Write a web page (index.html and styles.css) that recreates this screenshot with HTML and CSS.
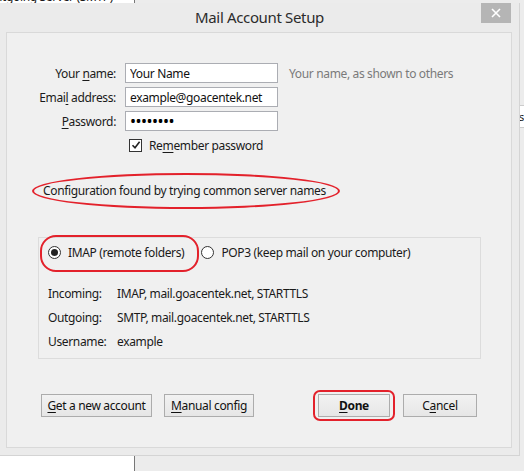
FILE: index.html
```html
<!DOCTYPE html>
<html lang="en">
<head>
  <meta charset="UTF-8" />
  <title>Mail Account Setup</title>
  <link rel="stylesheet" href="styles.css">
</head>
<body>
  <div class="desktop">
    <div class="back-left">
      <div class="back-text">Outgoing Server (SMTP)</div>
    </div>
    <div class="back-right">
      <div class="back-row">s</div>
    </div>
  </div>

  <div class="dialog">
    <div class="titlebar">
      <div class="title">Mail Account Setup</div>
      <button class="close-btn" title="Close">
        <svg viewBox="0 0 10 10" width="10" height="10">
          <path d="M1 1L9 9M9 1L1 9" stroke="#fff" stroke-width="1.6"></path>
        </svg>
      </button>
    </div>

    <div class="panel">
      <div class="form-grid">
        <label class="field-label" for="name">Your <u>n</u>ame:</label>
        <input class="field" id="name" type="text" value="Your Name">
        <div class="hint">Your name, as shown to others</div>

        <label class="field-label" for="email">Emai<u>l</u> address:</label>
        <input class="field" id="email" type="text" value="example@goacentek.net">
        <div></div>

        <label class="field-label" for="password"><u>P</u>assword:</label>
        <input class="field password" id="password" type="password" value="password">
        <div></div>

        <div></div>
        <label class="check-row">
          <span class="checkbox">
            <svg viewBox="0 0 10 10" width="10" height="10">
              <path d="M1.5 5.2L4 7.8L8.6 1.8" fill="none" stroke="#222" stroke-width="1.6"></path>
            </svg>
          </span>
          <span>Re<u>m</u>ember password</span>
        </label>
        <div></div>
      </div>

      <div class="status">
        <span class="status-text">Configuration found by trying common server names</span>
      </div>

      <div class="group">
        <div class="radio-row">
          <label class="radio-item imap">
            <span class="radio checked"></span>
            <span>IMAP (remote folders)</span>
          </label>
          <label class="radio-item">
            <span class="radio"></span>
            <span>POP3 (keep mail on your computer)</span>
          </label>
        </div>
        <div class="details">
          <div class="detail-label">Incoming:</div>
          <div>IMAP, mail.goacentek.net, STARTTLS</div>
          <div class="detail-label">Outgoing:</div>
          <div>SMTP, mail.goacentek.net, STARTTLS</div>
          <div class="detail-label">Username:</div>
          <div>example</div>
        </div>
      </div>

      <div class="buttons">
        <button class="btn btn-new"><u>G</u>et a new account</button>
        <button class="btn btn-manual"><u>M</u>anual config</button>
        <span class="spacer"></span>
        <span class="done-mark">
          <button class="btn btn-done"><u>D</u>one</button>
        </span>
        <button class="btn btn-cancel">C<u>a</u>ncel</button>
      </div>
    </div>
  </div>
</body>
</html>
```

FILE: styles.css
```css
:root {
  --frame: #ebebeb;
  --panel: #f0f0f0;
  --panel-border: #d9d9d9;
  --text: #1a1a1a;
  --hint: #7a7a7a;
  --input-border: #abadb3;
  --mark: #e3212b;
}

* {
  box-sizing: border-box;
}

body {
  margin: 0;
  width: 524px;
  height: 471px;
  overflow: hidden;
  position: relative;
  background: #ececec;
  font-family: "Noto Sans", "Open Sans", sans-serif;
  font-size: 12px;
  letter-spacing: -0.35px;
  color: var(--text);
}

u {
  text-decoration-thickness: 1px;
  text-underline-offset: 2px;
}

/* window behind the dialog */
.desktop {
  display: flex;
  height: 471px;
}

.back-left {
  width: 135px;
  background: #fff;
  border-right: 1px solid #777;
  overflow: hidden;
}

.back-text {
  margin-top: -12px;
  margin-left: -14px;
  white-space: nowrap;
}

.back-right {
  flex: 1;
  display: flex;
  justify-content: flex-end;
}

.back-row {
  width: 5px;
  margin-top: 105px;
  height: 23px;
  border-top: 1px solid #ccc;
  border-bottom: 1px solid #ccc;
  background: #fff;
  line-height: 22px;
  overflow: hidden;
  font-size: 11px;
}

/* dialog window */
.dialog {
  position: absolute;
  left: 0;
  top: 3px;
  width: 520px;
  height: 453px;
  background: var(--frame);
  border-right: 1px solid #d4d4d4;
  border-bottom: 1px solid #d4d4d4;
  display: flex;
  flex-direction: column;
}

.titlebar {
  position: relative;
  height: 29px;
  display: flex;
  align-items: center;
  justify-content: center;
}

.title {
  font-size: 15px;
  color: #2b2b2b;
  margin-top: -1px;
}

.close-btn {
  position: absolute;
  right: 8px;
  top: 0;
  width: 30px;
  height: 20px;
  border: none;
  padding: 0;
  background: #b5b5b5;
  display: flex;
  align-items: center;
  justify-content: center;
}

.panel {
  margin: 0 7px 7px 6px;
  flex: 1;
  background: var(--panel);
  border: 1px solid var(--panel-border);
  padding: 30px 0 0 0;
  display: flex;
  flex-direction: column;
}

.form-grid {
  display: grid;
  grid-template-columns: 109px 153px auto;
  grid-auto-rows: 20px;
  column-gap: 9px;
  row-gap: 4px;
  align-items: center;
}

.field-label {
  text-align: right;
}

.field {
  height: 20px;
  border: 1px solid var(--input-border);
  background: #fff;
  font-family: inherit;
  font-size: 12px;
  letter-spacing: -0.35px;
  color: #111;
  padding: 0 4px;
  margin: 0;
}

.password {
  font-size: 16px;
  letter-spacing: -0.5px;
  color: #000;
}

.hint {
  color: var(--hint);
  margin-left: 2px;
}

.check-row {
  display: flex;
  align-items: center;
  gap: 7px;
  padding-left: 4px;
  white-space: nowrap;
}

.checkbox {
  width: 13px;
  height: 13px;
  border: 1px solid #333;
  background: #fff;
  display: flex;
  align-items: center;
  justify-content: center;
}

.status {
  margin: 18px 0 0 25px;
}

.status-text {
  display: inline-block;
  line-height: 16px;
  padding: 8px 12px 8px 9px;
  border: 2px solid var(--mark);
  border-radius: 50%;
}

.group {
  margin: 28px 0 0 31px;
  width: 443px;
  height: 122px;
  border: 1px solid #dcdcdc;
  padding: 6px 0 0 9px;
}

.radio-row {
  display: flex;
  align-items: center;
  gap: 17px;
  height: 16px;
}

.radio-item {
  position: relative;
  display: flex;
  align-items: center;
  gap: 7px;
  white-space: nowrap;
}

.radio {
  width: 13px;
  height: 13px;
  border: 1px solid #333;
  border-radius: 50%;
  background: #fff;
  display: flex;
  align-items: center;
  justify-content: center;
}

.radio.checked::after {
  content: "";
  width: 7px;
  height: 7px;
  border-radius: 50%;
  background: #222;
}

/* annotation ring drawn over the group border */
.imap::before {
  content: "";
  position: absolute;
  left: -8px;
  top: -9px;
  width: 155px;
  height: 33px;
  border: 2px solid var(--mark);
  border-radius: 16px;
}

.details {
  display: grid;
  grid-template-columns: 53px auto;
  column-gap: 16px;
  row-gap: 7px;
  margin-top: 25px;
  line-height: 17px;
}

.detail-label {
  text-align: right;
}

.buttons {
  display: flex;
  align-items: center;
  margin: 31px 0 0 34px;
  width: 436px;
}

.btn {
  height: 23px;
  border: 1px solid #acacac;
  background: linear-gradient(#f2f2f2, #e6e6e6);
  font-family: inherit;
  font-size: 12px;
  letter-spacing: -0.35px;
  color: #111;
  padding: 0;
}

.btn-new {
  width: 111px;
}

.btn-manual {
  width: 90px;
  margin-left: 12px;
}

.spacer {
  flex: 1;
}

.done-mark {
  display: flex;
  padding: 2px 3px;
  border: 2px solid var(--mark);
  border-radius: 7px;
}

.btn-done {
  width: 72px;
  font-weight: bold;
}

.btn-cancel {
  width: 74px;
  margin-left: 8px;
}
```
